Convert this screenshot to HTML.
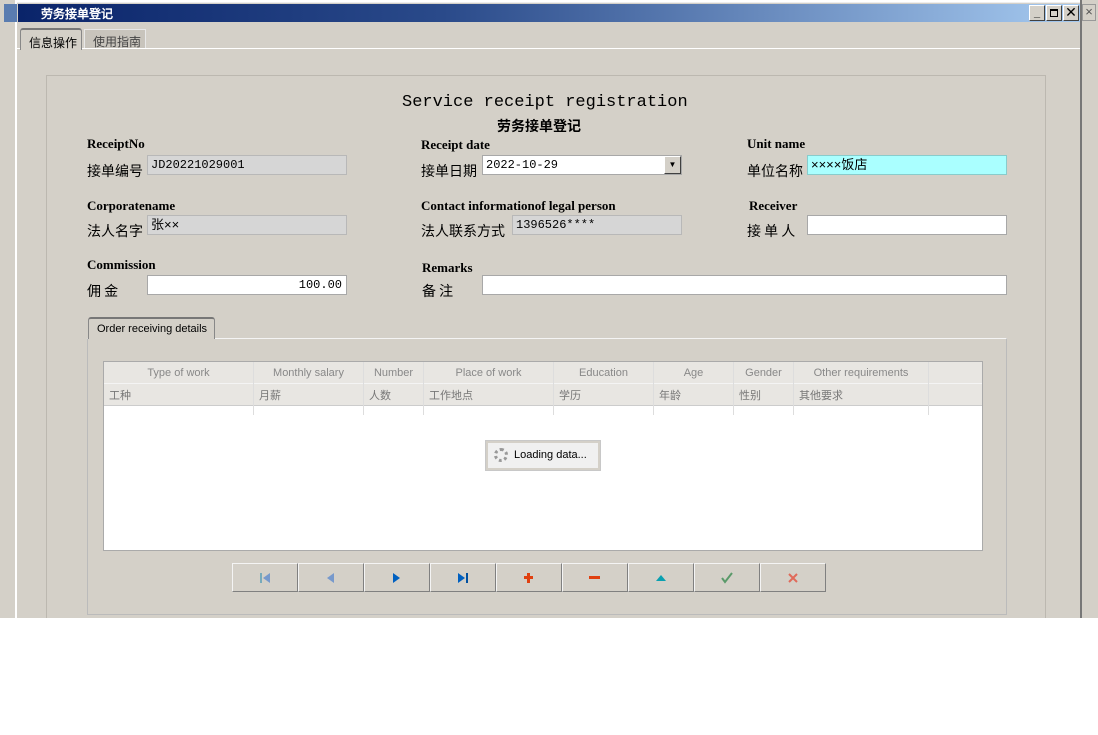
<!DOCTYPE html>
<html><head><meta charset="utf-8"><style>
*{box-sizing:border-box;margin:0;padding:0}
body{width:1098px;height:735px;background:#fff;position:relative;overflow:hidden;font-family:"Liberation Sans","Noto Sans CJK SC",sans-serif;font-size:13px}
.a{position:absolute}
.lbl{font-family:"Liberation Serif","Noto Serif CJK SC",serif;font-weight:bold;font-size:13px;color:#000}
.cn{font-family:"WenQuanYi Zen Hei","Noto Sans CJK SC",sans-serif;font-size:14px;color:#000}
.in{position:absolute;height:20px;border:1px solid #a8a8a8;background:#fff;font-family:"Liberation Mono","WenQuanYi Zen Hei",monospace;font-size:12px;line-height:18px;padding-left:3px}
.ro{background:#d6d6d6;border-color:#b8b8b8}
.hd{position:absolute;font-size:11px;color:#888;text-align:center}
.btn{position:absolute;top:563px;width:66px;height:29px;background:#d4d0c8;border:1px solid;border-color:#f4f4f4 #808080 #808080 #f4f4f4;display:flex;align-items:center;justify-content:center}
</style></head><body>
<div class="a" style="left:0;top:0;width:17px;height:618px;background:#d4d0c8;border-right:2px solid #fff"></div>
<div class="a" style="left:4px;top:4px;width:13px;height:18px;background:#5a7cb0"></div>
<div class="a" style="left:1080px;top:0;width:18px;height:618px;background:#d4d0c8;border-left:2px solid #777"></div>
<div class="a" style="left:1082px;top:4px;width:14px;height:17px;border:1px solid #999;font-size:13px;line-height:14px;text-align:center;color:#555">×</div>
<div class="a" style="left:17px;top:2px;width:1063px;height:616px;background:#d4d0c8;border-top:1px solid #eee"></div>
<div class="a" style="left:18px;top:4px;width:1062px;height:18px;background:linear-gradient(90deg,#0a246a,#2a4a8a 40%,#a6caf0)"></div>
<div class="a" style="left:41px;top:5px;color:#fff;font-weight:bold;font-size:12px;font-family:'WenQuanYi Zen Hei',sans-serif">劳务接单登记</div>
<div class="a" style="left:1029px;top:5px;width:16px;height:16px;background:#d4d0c8;border:1px solid;border-color:#fff #404040 #404040 #fff;font-size:11px;text-align:center;line-height:14px;font-weight:bold">_</div>
<div class="a" style="left:1046px;top:5px;width:16px;height:16px;background:#d4d0c8;border:1px solid;border-color:#fff #404040 #404040 #fff"><div style="margin:3px;width:8px;height:8px;border:1px solid #000;border-top-width:2px"></div></div>
<div class="a" style="left:1063px;top:5px;width:16px;height:16px;background:#d4d0c8;border:1px solid;border-color:#fff #404040 #404040 #fff;font-size:14px;text-align:center;line-height:13px">✕</div>
<div class="a" style="left:17px;top:48px;width:1063px;height:1px;background:#fff"></div>
<div class="a" style="left:20px;top:28px;width:62px;height:22px;background:#d4d0c8;border:1px solid #888;border-top:2px solid #777;border-bottom:none;border-radius:3px 3px 0 0;font-size:12px;padding:4px 0 0 8px;font-family:'WenQuanYi Zen Hei',sans-serif">信息操作</div>
<div class="a" style="left:84px;top:29px;width:62px;height:19px;background:#c8c4bc;border:1px solid #e8e8e8;border-bottom:none;font-size:12px;padding:3px 0 0 8px;color:#444;font-family:'WenQuanYi Zen Hei',sans-serif">使用指南</div>
<div class="a" style="left:46px;top:75px;width:1000px;height:560px;border:1px solid #bcb8b0"></div>
<div class="a" style="left:402px;top:93px;font-family:'Liberation Mono',monospace;font-size:17px">Service receipt registration</div>
<div class="a cn" style="left:497px;top:116px;font-weight:bold">劳务接单登记</div>
<div class="a lbl" style="left:87px;top:136px">ReceiptNo</div>
<div class="a cn" style="left:87px;top:161px">接单编号</div>
<div class="in ro" style="left:147px;top:155px;width:200px">JD20221029001</div>
<div class="a lbl" style="left:421px;top:137px">Receipt date</div>
<div class="a cn" style="left:421px;top:161px">接单日期</div>
<div class="in" style="left:482px;top:155px;width:200px">2022-10-29</div>
<div class="a" style="left:664px;top:156px;width:17px;height:18px;background:#d4d0c8;border:1px solid;border-color:#fff #404040 #404040 #fff;font-size:8px;text-align:center;line-height:16px">▼</div>
<div class="a lbl" style="left:747px;top:136px">Unit name</div>
<div class="a cn" style="left:747px;top:161px">单位名称</div>
<div class="in" style="left:807px;top:155px;width:200px;background:#aaffff;border-color:#8cc;font-family:'WenQuanYi Zen Hei',sans-serif;font-size:13px">××××饭店</div>
<div class="a lbl" style="left:87px;top:198px">Corporatename</div>
<div class="a cn" style="left:87px;top:221px">法人名字</div>
<div class="in ro" style="left:147px;top:215px;width:200px;font-family:'WenQuanYi Zen Hei',sans-serif;font-size:13px">张××</div>
<div class="a lbl" style="left:421px;top:198px">Contact informationof legal person</div>
<div class="a cn" style="left:421px;top:221px">法人联系方式</div>
<div class="in ro" style="left:512px;top:215px;width:170px">1396526****</div>
<div class="a lbl" style="left:749px;top:198px">Receiver</div>
<div class="a cn" style="left:747px;top:221px">接 单 人</div>
<div class="in" style="left:807px;top:215px;width:200px"></div>
<div class="a lbl" style="left:87px;top:257px">Commission</div>
<div class="a cn" style="left:87px;top:281px">佣 金</div>
<div class="in" style="left:147px;top:275px;width:200px;text-align:right;padding-right:4px">100.00</div>
<div class="a lbl" style="left:422px;top:260px">Remarks</div>
<div class="a cn" style="left:422px;top:281px">备 注</div>
<div class="in" style="left:482px;top:275px;width:525px"></div>
<div class="a" style="left:87px;top:338px;width:920px;height:277px;border:1px solid #bbb;border-top-color:#f4f4f4"></div>
<div class="a" style="left:88px;top:317px;width:127px;height:22px;background:#d4d0c8;border:1px solid #888;border-top:2px solid #777;border-bottom:none;border-radius:3px 3px 0 0;font-size:11px;padding:4px 0 0 8px">Order receiving details</div>
<div class="a" style="left:103px;top:361px;width:880px;height:190px;background:#fff;border:1px solid #aaa"></div>
<div class="a" style="left:104px;top:362px;width:878px;height:44px;background:#e8e6e2;border-bottom:1px solid #ccc"></div>
<div class="a" style="left:104px;top:383px;width:878px;height:1px;background:#f4f4f4"></div>
<div class="a" style="left:253px;top:362px;width:1px;height:53px;background:#ddd"></div>
<div class="a" style="left:363px;top:362px;width:1px;height:53px;background:#ddd"></div>
<div class="a" style="left:423px;top:362px;width:1px;height:53px;background:#ddd"></div>
<div class="a" style="left:553px;top:362px;width:1px;height:53px;background:#ddd"></div>
<div class="a" style="left:653px;top:362px;width:1px;height:53px;background:#ddd"></div>
<div class="a" style="left:733px;top:362px;width:1px;height:53px;background:#ddd"></div>
<div class="a" style="left:793px;top:362px;width:1px;height:53px;background:#ddd"></div>
<div class="a" style="left:928px;top:362px;width:1px;height:53px;background:#ddd"></div>
<div class="hd" style="left:104px;top:367px;width:149px">Type of work</div>
<div class="hd" style="left:254px;top:367px;width:109px">Monthly salary</div>
<div class="hd" style="left:364px;top:367px;width:59px">Number</div>
<div class="hd" style="left:424px;top:367px;width:129px">Place of work</div>
<div class="hd" style="left:554px;top:367px;width:99px">Education</div>
<div class="hd" style="left:654px;top:367px;width:79px">Age</div>
<div class="hd" style="left:734px;top:367px;width:59px">Gender</div>
<div class="hd" style="left:794px;top:367px;width:134px">Other requirements</div>
<div class="hd" style="left:109px;top:387px;color:#777">工种</div>
<div class="hd" style="left:259px;top:387px;color:#777">月薪</div>
<div class="hd" style="left:369px;top:387px;color:#777">人数</div>
<div class="hd" style="left:429px;top:387px;color:#777">工作地点</div>
<div class="hd" style="left:559px;top:387px;color:#777">学历</div>
<div class="hd" style="left:659px;top:387px;color:#777">年龄</div>
<div class="hd" style="left:739px;top:387px;color:#777">性别</div>
<div class="hd" style="left:799px;top:387px;color:#777">其他要求</div>
<div class="a" style="left:486px;top:441px;width:114px;height:29px;background:#f0f0f0;border:2px solid #d4d0c8;outline:1px solid #c8c8c8;font-size:11px;padding:6px 0 0 26px">Loading data...</div>
<div class="a" style="left:494px;top:448px;width:14px;height:14px;border:3px dotted #999;border-radius:50%"></div>
<div class="btn" style="left:232px"><svg width="14" height="12"><rect x="2" y="1" width="2" height="10" fill="#7ab"/><path d="M12 1 L5 6 L12 11Z" fill="#79c"/></svg></div>
<div class="btn" style="left:298px"><svg width="14" height="12"><path d="M10 1 L3 6 L10 11Z" fill="#79c"/></svg></div>
<div class="btn" style="left:364px"><svg width="14" height="12"><path d="M3 1 L10 6 L3 11Z" fill="#0060c0"/></svg></div>
<div class="btn" style="left:430px"><svg width="14" height="12"><path d="M2 1 L9 6 L2 11Z" fill="#0060c0"/><rect x="10" y="1" width="2" height="10" fill="#0050a0"/></svg></div>
<div class="btn" style="left:496px"><svg width="12" height="12"><rect x="4" y="1" width="3" height="10" fill="#e04010"/><rect x="1" y="4" width="9" height="3" fill="#e04010"/></svg></div>
<div class="btn" style="left:562px"><svg width="12" height="6"><rect x="0" y="1" width="11" height="3" fill="#e04010"/></svg></div>
<div class="btn" style="left:628px"><svg width="12" height="8"><path d="M1 7 L6 1 L11 7Z" fill="#0aa0b0"/></svg></div>
<div class="btn" style="left:694px"><svg width="12" height="12"><path d="M1 6 L4 10 L11 1" stroke="#5a9a6a" stroke-width="2" fill="none"/></svg></div>
<div class="btn" style="left:760px"><svg width="12" height="12"><path d="M2 2 L10 10 M10 2 L2 10" stroke="#e06a5a" stroke-width="2"/></svg></div>
<div class="a" style="left:0;top:618px;width:1098px;height:117px;background:#fff"></div>
</body></html>
